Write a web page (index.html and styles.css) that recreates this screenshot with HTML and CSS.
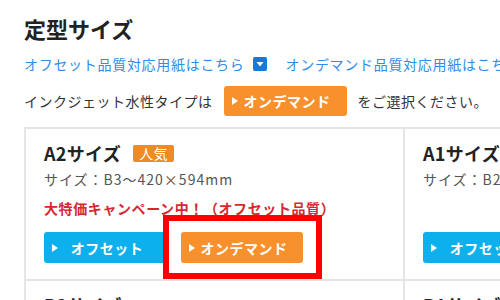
FILE: index.html
```html
<!DOCTYPE html>
<html lang="ja">
<head>
<meta charset="utf-8">
<title>定型サイズ</title>
<link rel="stylesheet" href="styles.css">
</head>
<body>
<div class="page">
  <h2 class="title">定型サイズ</h2>
  <div class="links">
    <a class="link" href="#">オフセット品質対応用紙はこちら</a>
    <span class="link-icon"><svg width="14" height="14" viewBox="0 0 14 14"><rect width="14" height="14" rx="2" fill="#1479d9"/><path d="M3.5 5 L10.5 5 L7 9.5 Z" fill="#fff"/></svg></span>
    <a class="link link-second" href="#">オンデマンド品質対応用紙はこちら</a>
  </div>
  <div class="notice">
    <span>インクジェット水性タイプは</span>
    <a class="btn btn-orange btn-top" href="#"><span class="btn-label">オンデマンド</span></a>
    <span>をご選択ください。</span>
  </div>
  <div class="grid">
    <div class="cell">
      <div class="cell-head"><span class="cell-title">A2サイズ</span><span class="badge">人気</span></div>
      <div class="cell-size">サイズ：B3〜420×594mm</div>
      <div class="cell-campaign">大特価キャンペーン中！（オフセット品質）</div>
      <div class="btns">
        <a class="btn btn-blue" href="#"><span class="btn-label">オフセット</span></a>
        <span class="highlight"><a class="btn btn-orange" href="#"><span class="btn-label">オンデマンド</span></a></span>
      </div>
    </div>
    <div class="cell">
      <div class="cell-head"><span class="cell-title">A1サイズ</span></div>
      <div class="cell-size">サイズ：B2〜594×841mm</div>
      <div class="btns">
        <a class="btn btn-blue" href="#"><span class="btn-label">オフセット</span></a>
        <a class="btn btn-orange" href="#"><span class="btn-label">オンデマンド</span></a>
      </div>
    </div>
    <div class="cell">
      <div class="cell-head"><span class="cell-title">B2サイズ</span></div>
      <div class="cell-size">サイズ：515×728mm</div>
    </div>
    <div class="cell">
      <div class="cell-head"><span class="cell-title">B1サイズ</span></div>
      <div class="cell-size">サイズ：728×1030mm</div>
    </div>
  </div>
</div>
</body>
</html>
```

FILE: styles.css
```css
html, body {
  margin: 0;
  padding: 0;
  overflow: hidden;
  background: #fff;
}
body {
  font-family: "Noto Sans CJK JP", "Noto Sans", sans-serif;
  color: #333;
  font-size: 14px;
  letter-spacing: 0.5px;
}
.page {
  padding: 13px 0 0 24px;
  width: 800px;
}
.title {
  margin: 0;
  font-size: 22px;
  line-height: 30px;
  font-weight: bold;
  letter-spacing: 0;
  color: #222;
}
.links {
  margin-top: 11px;
  display: flex;
  align-items: center;
  height: 20px;
  line-height: 20px;
  white-space: nowrap;
}
.link {
  color: #2f8ce8;
  text-decoration: none;
  letter-spacing: 0.7px;
}
.link-icon {
  display: flex;
  margin-left: 8px;
}
.link-second {
  margin-left: 19px;
}
.notice {
  margin-top: 12px;
  display: flex;
  align-items: center;
  white-space: nowrap;
  line-height: 20px;
}
.btn {
  display: flex;
  align-items: center;
  box-sizing: border-box;
  width: 122px;
  height: 31px;
  padding: 0 10px 0 8px;
  border-radius: 3px;
  color: #fff;
  font-weight: bold;
  text-decoration: none;
  font-size: 14px;
  letter-spacing: 0.5px;
}
.btn::before {
  content: "";
  width: 0;
  height: 0;
  border-left: 6px solid #fff;
  border-top: 4px solid transparent;
  border-bottom: 4px solid transparent;
}
.btn-label {
  flex: 1;
  text-align: center;
}
.btn-orange {
  background: #f8912c;
}
.btn-blue {
  background: #0bb0ec;
}
.btn-top {
  width: 123px;
  height: 30px;
  margin: 0 11px;
}
.grid {
  margin-top: 11px;
  display: grid;
  grid-template-columns: 379px 379px;
  border-top: 2px solid #e6e6e6;
  border-left: 2px solid #e6e6e6;
}
.cell {
  display: flex;
  flex-direction: column;
  padding: 12px 18px 16px 18px;
  border-right: 2px solid #e6e6e6;
  border-bottom: 2px solid #e6e6e6;
}
.cell-head {
  display: flex;
  align-items: center;
  height: 24px;
}
.cell-title {
  font-size: 18px;
  font-weight: bold;
  color: #222;
  line-height: 24px;
  letter-spacing: 0.3px;
}
.badge {
  margin-left: 12px;
  width: 41px;
  height: 17px;
  border-radius: 2px;
  background: #f08a24;
  color: #fff;
  font-size: 14px;
  line-height: 17px;
  text-align: center;
  letter-spacing: 0.5px;
}
.cell-size {
  margin-top: 4px;
  color: #555;
  line-height: 20px;
  letter-spacing: 1px;
}
.cell-campaign {
  margin-top: 9px;
  color: #d8282f;
  font-weight: bold;
  line-height: 20px;
  letter-spacing: 0.6px;
}
.btns {
  margin-top: auto;
  padding-top: 14px;
  display: flex;
  gap: 15px;
}
.highlight {
  position: relative;
  display: flex;
}
.highlight::after {
  content: "";
  position: absolute;
  top: -17px;
  left: -18px;
  right: -19px;
  bottom: -16px;
  border: 6px solid #ff0000;
  pointer-events: none;
}
```
